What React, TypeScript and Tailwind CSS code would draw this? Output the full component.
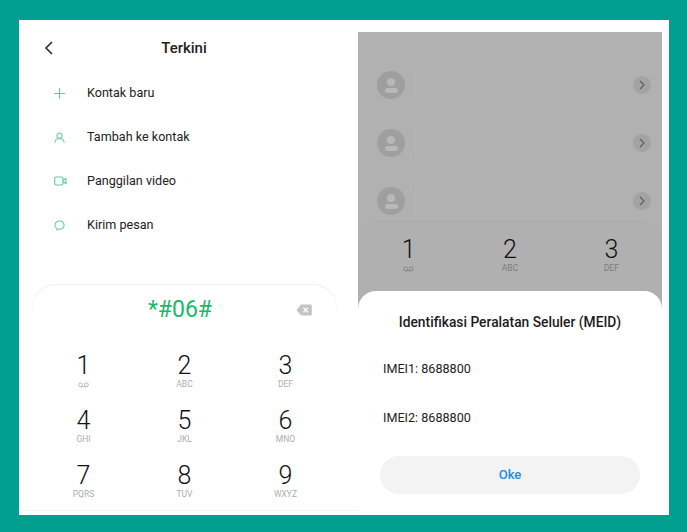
const FONT = "font-['Roboto','Liberation_Sans',sans-serif]";

function Voicemail() {
  return (
    <svg viewBox="0 0 12 6" width="11" height="6" fill="none" stroke="currentColor" strokeWidth="0.9">
      <circle cx="2.8" cy="2.8" r="2.1" />
      <circle cx="9.2" cy="2.8" r="2.1" />
      <path d="M2.8 4.9h6.4" />
    </svg>
  );
}

function Key({ digit, sub, dim }: { digit: string; sub: string; dim?: boolean }) {
  return (
    <div className="flex h-[55px] flex-col items-center pt-[3px]">
      <span className="h-[26px] text-[25px] leading-[26px] font-light text-[#111111]">{digit}</span>
      <span className={`flex h-[11px] items-center text-[8.5px] leading-[11px] ${dim ? "text-[#7d7d7d]" : "text-[#adadad]"}`}>
        {sub === "vm" ? <Voicemail /> : sub}
      </span>
    </div>
  );
}

function Row({ icon, label }: { icon: React.ReactNode; label: string }) {
  return (
    <div className="flex h-[44px] items-center">
      <div className="flex w-[68px] items-center pl-[35px]">{icon}</div>
      <span className="text-[12.6px] text-[#222222]">{label}</span>
    </div>
  );
}

const ic = { fill: "none", stroke: "#5fcb9f", strokeWidth: 1.1, strokeLinecap: "round" as const, strokeLinejoin: "round" as const };

function Contact() {
  return (
    <div className="flex h-[58px] items-center justify-between pl-[19px] pr-[11px]">
      <div className="flex items-center">
        <div className="flex h-[28px] w-[28px] flex-col items-center justify-center gap-[2px] rounded-full bg-[#9f9f9f]">
          <div className="h-[8px] w-[8px] rounded-full bg-[#b8b8b8]" />
          <div className="h-[5px] w-[13px] rounded-full bg-[#b8b8b8]" />
        </div>
        <div className="ml-[10px] h-[28px] w-px bg-[#b6b6b6]" />
      </div>
      <div className="flex h-[18px] w-[18px] items-center justify-center rounded-full bg-[#a3a3a3]">
        <svg width="8" height="10" viewBox="0 0 8 10" fill="none" stroke="#5f5f5f" strokeWidth="1.2">
          <path d="M2 1l4 4-4 4" />
        </svg>
      </div>
    </div>
  );
}

export default function App() {
  return (
    <div className={`h-[532px] w-[687px] overflow-hidden bg-[#009f90] pt-[20px] pl-[19px] ${FONT}`}>
      <div className="flex h-[495px] w-[650px] bg-white">
        <div className="flex w-[339px] flex-col">
          <div className="relative flex h-[51px] items-start justify-center pr-[9px] pt-[19px]">
            <svg className="absolute left-[25px] top-[21px]" width="10" height="14" viewBox="0 0 10 14" fill="none" stroke="#222" strokeWidth="1.5">
              <path d="M8 1L2 7l6 6" />
            </svg>
            <span className="text-[15px] leading-[19px] font-medium text-[#222222]">Terkini</span>
          </div>
          <div className="flex flex-col">
            <Row label="Kontak baru" icon={<svg width="11" height="11" viewBox="0 0 11 11" {...ic}><path d="M5.5 0.5v10M0.5 5.5h10" /></svg>} />
            <Row label="Tambah ke kontak" icon={<svg width="11" height="11" viewBox="0 0 12 12" {...ic}><circle cx="6" cy="4" r="2.8" /><path d="M1 11.2c.3-2.6 2-4.2 5-4.2s4.7 1.6 5 4.2" /></svg>} />
            <Row label="Panggilan video" icon={<svg width="13" height="10" viewBox="0 0 13 10" {...ic}><rect x="0.7" y="1" width="8.3" height="8" rx="1.5" /><path d="M9 4l3-1.5v5L9 6" /></svg>} />
            <Row label="Kirim pesan" icon={<svg width="11" height="11" viewBox="0 0 12 12" {...ic}><path d="M6 1c2.9 0 5 1.9 5 4.5S8.9 10 6 10c-.3 0-.7 0-1-.1L3.2 11 3 9.2C1.800 8.400 1 7.100 1 5.500 1 2.900 3.100 1 6 1z" /></svg>} />
          </div>
          <div className="mt-[37px] ml-[13px] h-[226px] w-[305px] rounded-t-[24px] bg-gradient-to-b from-[#eeeeee] to-white to-[14%] px-px pt-px">
            <div className="h-full rounded-t-[23px] bg-white">
              <div className="relative flex h-[51px] items-center justify-center pr-[9px]">
                <span className="text-[23px] text-[#19b96b]">*#06#</span>
                <svg className="absolute right-[24px] top-[19px]" width="16" height="12" viewBox="0 0 16 12">
                  <path d="M5 0.5h10a.8.8 0 0 1 .8.8v9.4a.8.8 0 0 1-.8.8H5L0.5 6z" fill="#c4c4c4" />
                  <path d="M7.5 3.8l4.4 4.4M11.9 3.8L7.5 8.2" stroke="#fff" strokeWidth="1.3" />
                </svg>
              </div>
              <div className="mt-[14px] grid grid-cols-3">
                <Key digit="1" sub="vm" />
                <Key digit="2" sub="ABC" />
                <Key digit="3" sub="DEF" />
                <Key digit="4" sub="GHI" />
                <Key digit="5" sub="JKL" />
                <Key digit="6" sub="MNO" />
                <Key digit="7" sub="PQRS" />
                <Key digit="8" sub="TUV" />
                <Key digit="9" sub="WXYZ" />
              </div>
            </div>
          </div>
          <div className="h-px bg-[#f3f3f3]" />
        </div>

        <div className="relative mt-[12px] h-[478px] w-[304px] overflow-hidden bg-[#b1b1b1]">
          <div className="flex flex-col pt-[24px]">
            <Contact />
            <Contact />
            <Contact />
          </div>
          <div className="mt-[-9px] h-[90px] rounded-t-[24px] border-t border-[#ababab] bg-[#b0b0b0] pt-[12px]">
            <div className="grid grid-cols-3">
              <Key digit="1" sub="vm" dim />
              <Key digit="2" sub="ABC" dim />
              <Key digit="3" sub="DEF" dim />
            </div>
          </div>
          <div className="absolute inset-x-0 top-[259px] bottom-0 flex flex-col rounded-t-[18px] bg-white">
            <h2 className="mt-[21px] text-center text-[13.8px] leading-[20px] font-medium text-[#1c1c1c]">Identifikasi Peralatan Seluler (MEID)</h2>
            <p className="mt-[27px] pl-[25px] text-[12.6px] leading-[20px] text-[#222222]">IMEI1: 8688800</p>
            <p className="mt-[29px] pl-[25px] text-[12.6px] leading-[20px] text-[#222222]">IMEI2: 8688800</p>
            <button className="mx-[22px] mt-[28px] flex h-[38px] w-[260px] items-center justify-center rounded-full bg-[#f3f3f3] text-[13px] font-medium text-[#1a90e8]">Oke</button>
          </div>
        </div>
      </div>
    </div>
  );
}
